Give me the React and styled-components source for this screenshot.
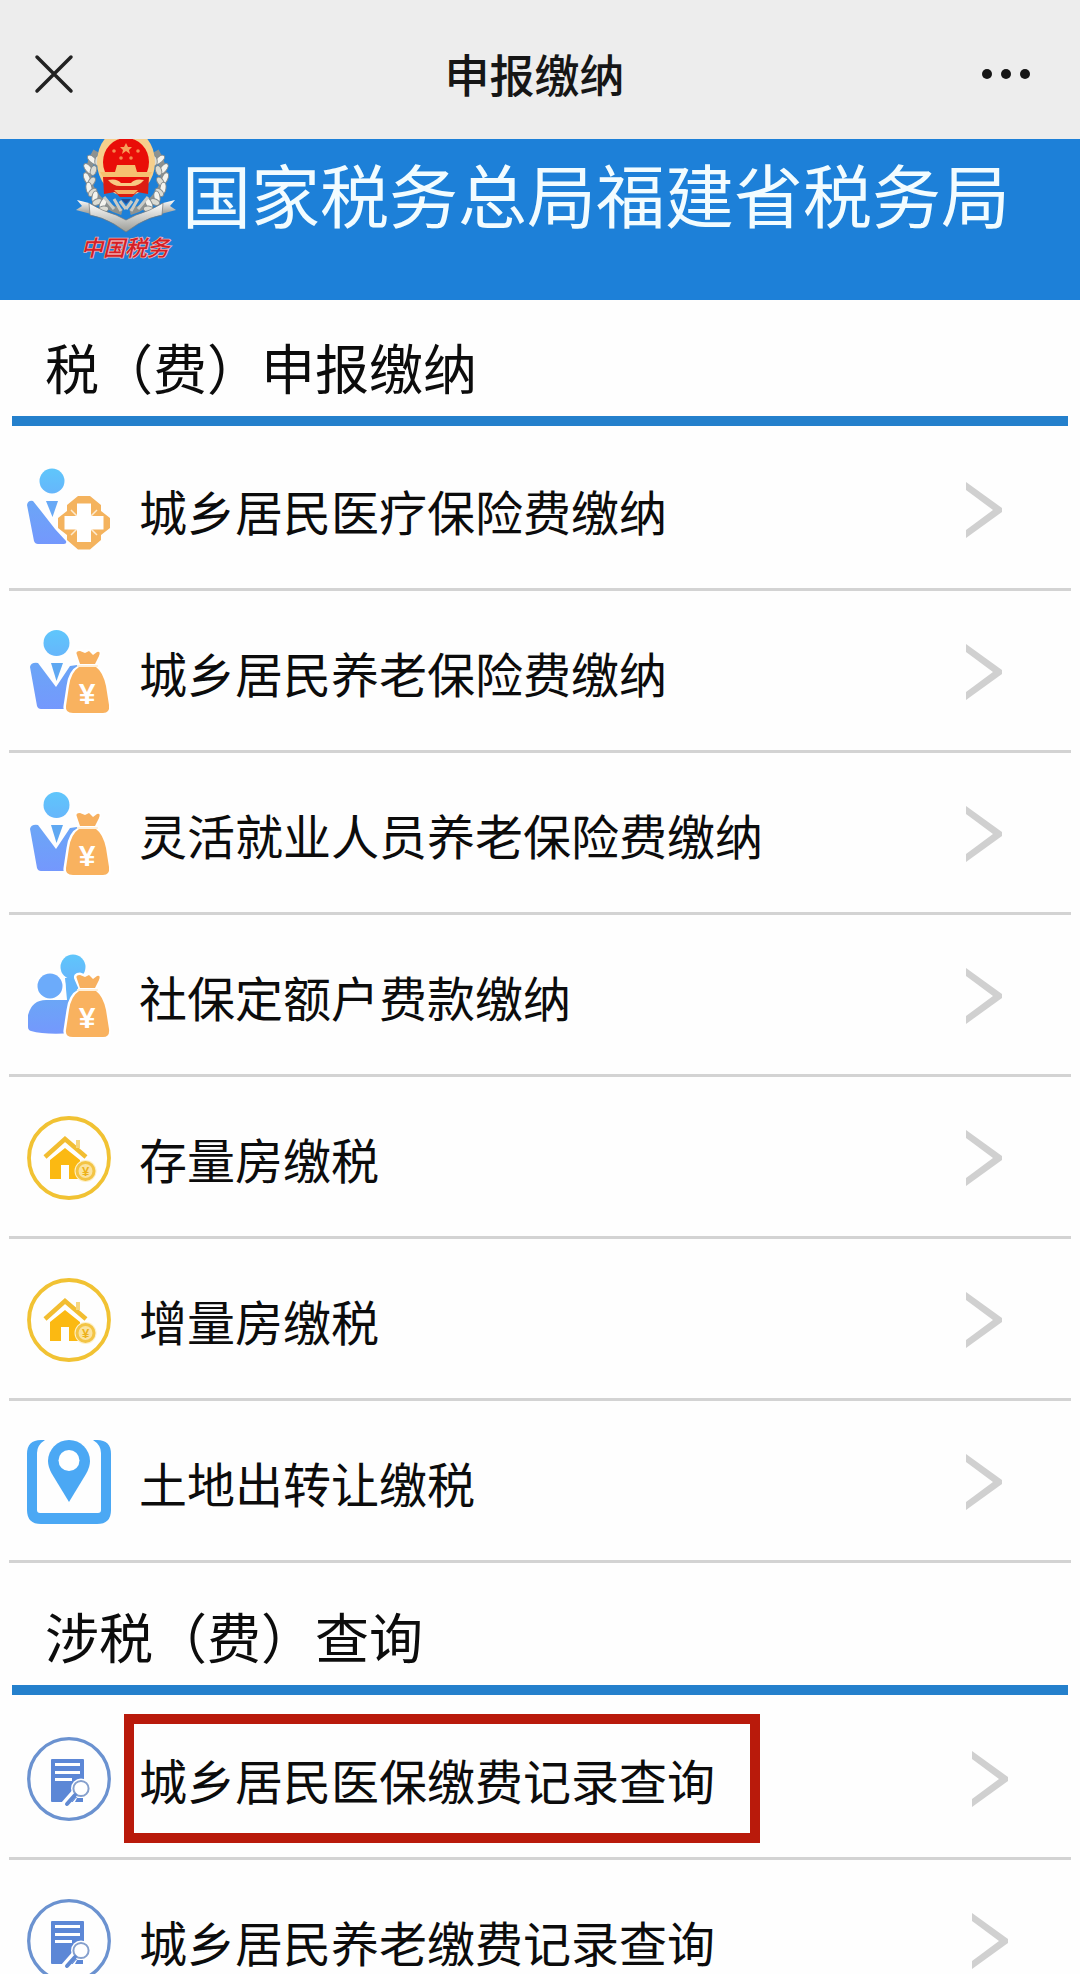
import React from "react";
import styled, { createGlobalStyle } from "styled-components";

const GlobalStyle = createGlobalStyle`
  *, *::before, *::after { box-sizing: border-box; }
  body {
    margin: 0;
    background: #fefefe;
    color: #0c0c0c;
    font-family: "Noto Sans CJK SC", "Noto Sans", sans-serif;
  }
`;

const Shell = styled.div`
  display: flex;
  flex-direction: column;
  height: 100vh;
`;

const TopBar = styled.header`
  display: grid;
  grid-template-columns: 60px 1fr 56px;
  align-items: center;
  flex: none;
  padding: 38px 49px 29px 34px;
  background: #ededed;
`;

const BarButton = styled.button`
  display: flex;
  align-items: center;
  justify-content: ${(p) => p.$align};
  height: 72px;
  padding: 0;
  border: 0;
  background: none;
  color: #222;
`;

const BarTitle = styled.h1`
  margin: 0;
  font-size: 45px;
  line-height: 72px;
  font-weight: 500;
  color: #161616;
  text-align: center;
`;

const Scroller = styled.main`
  flex: 1;
  min-height: 0;
  overflow-y: auto;
  scrollbar-width: none;
`;

const Banner = styled.div`
  display: flex;
  align-items: flex-start;
  gap: 6px;
  padding: 0 0 32px 76px;
  background: #1d80d8;
`;

const BannerName = styled.p`
  margin: 0;
  padding-top: 4px;
  font-size: 69px;
  line-height: 100px;
  color: #f2fcff;
  white-space: nowrap;
`;

const SectionTitle = styled.h2`
  margin: 0 12px;
  padding: 27px 33px 9px;
  border-bottom: 10px solid #2480cc;
  font-size: 54px;
  line-height: 80px;
  font-weight: 400;
`;

const List = styled.ul`
  margin: 0;
  padding: 3px 9px 6px;
  list-style: none;
`;

const RowLink = styled.a`
  display: flex;
  align-items: center;
  gap: 28px;
  height: 162px;
  padding: 3px ${(p) => p.$inset}px 0 18px;
  border-bottom: 3px solid #d3d3d3;
  color: inherit;
  text-decoration: none;
`;

const Label = styled.span`
  position: relative;
  font-size: 48px;
  line-height: 72px;
  white-space: nowrap;

  &::after {
    content: "";
    display: ${(p) => (p.$marked ? "block" : "none")};
    position: absolute;
    inset: -29px -45px -28px -15px;
    border: 10px solid #b91a0b;
  }
`;

const Glyph = styled.svg`
  display: block;
  flex: none;
`;

const Arrow = styled(Glyph)`
  margin-left: auto;
`;

function CloseIcon() {
  return (
    <Glyph width="40" height="40" viewBox="0 0 40 40" aria-hidden="true">
      <path d="M3 3 37 37M37 3 3 37" fill="none" stroke="#222" strokeWidth="3.5" strokeLinecap="round" />
    </Glyph>
  );
}

function MoreIcon() {
  return (
    <Glyph width="50" height="12" viewBox="0 0 50 12" aria-hidden="true">
      <circle cx="6" cy="6" r="5" fill="#161616" />
      <circle cx="25" cy="6" r="5" fill="#161616" />
      <circle cx="44" cy="6" r="5" fill="#161616" />
    </Glyph>
  );
}

function Emblem() {
  const leaves = [
    [17, 20, -20], [13, 29, -10], [12, 39, 5], [14, 49, 20], [20, 58, 38], [28, 65, 55],
  ];
  return (
    <Glyph width="100" height="129" viewBox="0 0 100 129" role="img" aria-label="中国税务">
      <defs>
        <linearGradient id="silver" x1="0" y1="0" x2="0" y2="1">
          <stop offset="0" stopColor="#ffffff" />
          <stop offset="1" stopColor="#9b9c96" />
        </linearGradient>
      </defs>
      {[false, true].map((flip) => (
        <g key={String(flip)} transform={flip ? "translate(100 0) scale(-1 1)" : undefined}>
          <path d="M20 12Q6 36 18 54 28 68 46 73" fill="none" stroke="#8d9290" strokeWidth="6" />
          {leaves.map(([x, y, a]) => (
            <g key={y} transform={`rotate(${a} ${x} ${y})`}>
              <ellipse cx={x - 1} cy={y} rx="3" ry="6" fill="#f4f4ef" stroke="#858b8d" strokeWidth="1" transform={`rotate(-28 ${x} ${y})`} />
              <ellipse cx={x + 5} cy={y + 1} rx="3" ry="5" fill="#dcdcd4" stroke="#858b8d" strokeWidth="1" transform={`rotate(28 ${x} ${y})`} />
            </g>
          ))}
          <path d="M38 70 28 58M45 72 38 60M50 70 44 62" stroke="#c9cac5" strokeWidth="3" />
          <path d="M1 61 13 64 16 70 15 75 0 71 6 67Z" fill="url(#silver)" />
        </g>
      ))}
      <ellipse cx="50" cy="23" rx="29" ry="34" fill="#f6cf8c" />
      <path d="M27 38H73L72 55 61 53 56 58H44L39 53 28 55Z" fill="#dc1c12" />
      <ellipse cx="50" cy="23" rx="23" ry="24" fill="#e90d08" />
      <path d="M50 4 52 8 56 8 53 11 54 15 50 12 46 15 47 11 44 8 48 8Z" fill="#f7a05a" />
      <g fill="#f58a50">
        <circle cx="38" cy="12" r="1.8" />
        <circle cx="62" cy="12" r="1.8" />
        <circle cx="45" cy="19" r="1.8" />
        <circle cx="55" cy="19" r="1.8" />
      </g>
      <path d="M41 26H59L61 33H76L73 38H27L24 33H39Z" fill="#f6c070" />
      <path d="M32 41Q41 39 45 44H55Q59 39 68 41 63 47 56 47H44Q37 47 32 41Z" fill="#f8c983" />
      <path d="M38 51H62L58 55H42Z" fill="#f5b064" />
      <path d="M45 60H55L50 65Z" fill="#244f94" />
      <path d="M13 64Q26 72 40 76L50 81 60 76Q74 72 87 64L86 76Q74 78 62 85L50 93 38 85Q26 78 14 76Z" fill="url(#silver)" stroke="#74797a" strokeWidth="0.7" />
      <g
        fill="#d51f26"
        stroke="#f3b3b6"
        strokeWidth="1.5"
        paintOrder="stroke"
        fontWeight="500"
        fontStyle="italic"
        fontFamily='"Noto Sans CJK SC", sans-serif'
      >
        <text x="5" y="117" fontSize="22">中国税务</text>
      </g>
    </Glyph>
  );
}

function IconFrame({ children }) {
  return (
    <Glyph width="84" height="84" viewBox="0 0 84 84" aria-hidden="true">
      <defs>
        <linearGradient id="head" x1="0" y1="0" x2="0" y2="1">
          <stop offset="0" stopColor="#5fc6fb" />
          <stop offset="1" stopColor="#66b6fb" />
        </linearGradient>
        <linearGradient id="coat" x1="0" y1="0" x2="0" y2="1">
          <stop offset="0" stopColor="#6ba6f6" />
          <stop offset="1" stopColor="#7498fd" />
        </linearGradient>
      </defs>
      {children}
    </Glyph>
  );
}

function MoneyBag() {
  return (
    <>
      <path
        d="M50 25Q48 21 53 21L58 23 62 21 66 25 70 22Q73 22 71 26L67 35 69 38Q76 42 79 56L82 75Q83 83 76 83H46Q38 83 39 76L42 56Q44 42 52 38L54 34Z"
        fill="#fff" stroke="#fff" strokeWidth="5" strokeLinejoin="round"
      />
      <path d="M50 25Q48 21 53 21L58 23 62 21 66 25 70 22Q74 21 72 26L68 34H53Z" fill="#f7b05f" />
      <path d="M52 37H69Q76 42 79 56L82 75Q83 83 76 83H46Q38 83 39 76L42 56Q44 42 52 37Z" fill="#f9b25f" />
      <path d="M50 36H71" stroke="#fff0da" strokeWidth="2" />
      <text x="60" y="74" textAnchor="middle" fontSize="30" fontWeight="700" fill="#fff" fontFamily='"Liberation Sans", sans-serif'>¥</text>
    </>
  );
}

function MedicalIcon() {
  const outline =
    "M51 28H63L74 37V43L83 50V60L74 67V72L63 81.500H51L40 72V67L31 60V50L40 43V37Z";
  return (
    <IconFrame>
      <circle cx="25" cy="13" r="12.5" fill="url(#head)" />
      <path d="M0 37Q1 32 6 33L14 43 28 61 39 73Q40 76 37 76H11Q8 76 7 73Z" fill="url(#coat)" />
      <path d="M19 33H31L25.500 49Z" fill="#68a9f6" />
      <path d={outline} fill="#f4b35e" />
      <path d="M44 42 51 49M70 42 63 49M44 67 51 60M70 67 63 60" stroke="#fdebd0" strokeWidth="1.500" />
      <path d="M50 35.500H64V48H76.500V61.500H64V74H50V61.500H37.500V48H50Z" fill="#fff" />
    </IconFrame>
  );
}

function PensionIcon() {
  return (
    <IconFrame>
      <circle cx="29.500" cy="13" r="13" fill="url(#head)" />
      <path d="M3 37Q4 32 11 33L29 57 43 36 50 35V79H14Q11 79 10 76Z" fill="url(#coat)" />
      <path d="M24 33H36L29.500 51Z" fill="#5fa8f2" />
      <MoneyBag />
    </IconFrame>
  );
}

function GroupIcon() {
  return (
    <IconFrame>
      <path d="M38 24H54V46H40Z" fill="#65b5fa" />
      <circle cx="46" cy="13" r="12.500" fill="url(#head)" />
      <circle cx="23" cy="32" r="15.500" fill="#fff" />
      <circle cx="23" cy="32" r="12.500" fill="#6cabfa" />
      <path d="M1 61Q5 46 19 46H46V79Q18 81 4 77 1 76 1 73Z" fill="url(#coat)" />
      <MoneyBag />
    </IconFrame>
  );
}

function HouseIcon() {
  return (
    <IconFrame>
      <circle cx="42" cy="42" r="40" fill="none" stroke="#f1c233" strokeWidth="3.800" />
      <path d="M18 41 38 23 59 41" fill="none" stroke="#f2bd31" strokeWidth="4.500" />
      <path d="M51 24V32" stroke="#f6d67e" strokeWidth="4" />
      <path d="M23 44 38 32 53 44V63H42V49H34V63H23Z" fill="#fbb912" />
      <circle cx="58.500" cy="55" r="11" fill="#fdf0c8" />
      <circle cx="58.500" cy="55" r="8.500" fill="#fbe3a0" stroke="#f3c445" strokeWidth="3" />
      <text x="58.500" y="60" textAnchor="middle" fontSize="13" fontWeight="700" fill="#edb21c" fontFamily='"Liberation Sans", sans-serif'>¥</text>
    </IconFrame>
  );
}

function LandIcon() {
  return (
    <IconFrame>
      <path
        d="M18 0H14Q0 0 0 14V70Q0 84 14 84H70Q84 84 84 70V14Q84 0 70 0H66Q74 5 74 13V70Q74 73 71 73H13Q10 73 10 70V13Q10 5 18 0Z"
        fill="#4ba8f4"
      />
      <path d="M42 0A21 21 0 0 1 63 21Q63 27 59 34L42 62 25 34Q21 27 21 21A21 21 0 0 1 42 0Z" fill="#4ba8f4" />
      <circle cx="42" cy="20.500" r="10.500" fill="#fff" />
    </IconFrame>
  );
}

function RecordIcon() {
  return (
    <IconFrame>
      <circle cx="42" cy="42" r="40.300" fill="none" stroke="#6b92d0" strokeWidth="3.300" />
      <path d="M25 22H56Q57 22 57 23V65H25Q24 65 24 64V23Q24 22 25 22Z" fill="#5c87d6" />
      <path d="M28 27.500H53M28 35.500H53M28 42.500H45" stroke="#fff" strokeWidth="2.800" />
      <circle cx="54" cy="51.500" r="10" fill="#fff" />
      <path d="M50 53 36 69" stroke="#fff" strokeWidth="7" />
      <path d="M43 68H62V61H49Z" fill="#fff" />
      <path d="M50 61H56V65H48Z" fill="#5c87d6" />
      <circle cx="54" cy="51.500" r="7.600" fill="#fff" stroke="#86a0cd" strokeWidth="2" />
      <path d="M48 58 40 67" stroke="#6089d2" strokeWidth="4" strokeLinecap="round" />
    </IconFrame>
  );
}

const sections = [
  {
    title: "税（费）申报缴纳",
    inset: 69,
    rows: [
      { label: "城乡居民医疗保险费缴纳", Icon: MedicalIcon },
      { label: "城乡居民养老保险费缴纳", Icon: PensionIcon },
      { label: "灵活就业人员养老保险费缴纳", Icon: PensionIcon },
      { label: "社保定额户费款缴纳", Icon: GroupIcon },
      { label: "存量房缴税", Icon: HouseIcon },
      { label: "增量房缴税", Icon: HouseIcon },
      { label: "土地出转让缴税", Icon: LandIcon },
    ],
  },
  {
    title: "涉税（费）查询",
    inset: 63,
    rows: [
      { label: "城乡居民医保缴费记录查询", Icon: RecordIcon, marked: true },
      { label: "城乡居民养老缴费记录查询", Icon: RecordIcon },
    ],
  },
];

export default function App() {
  return (
    <Shell>
      <GlobalStyle />
      <TopBar>
        <BarButton type="button" aria-label="关闭" $align="flex-start">
          <CloseIcon />
        </BarButton>
        <BarTitle>申报缴纳</BarTitle>
        <BarButton type="button" aria-label="更多" $align="flex-end">
          <MoreIcon />
        </BarButton>
      </TopBar>
      <Scroller>
        <Banner>
          <Emblem />
          <BannerName>国家税务总局福建省税务局</BannerName>
        </Banner>
        {sections.map(({ title, inset, rows }) => (
          <section key={title}>
            <SectionTitle>{title}</SectionTitle>
            <List>
              {rows.map(({ label, Icon, marked }) => (
                <li key={label}>
                  <RowLink href="#" $inset={inset}>
                    <Icon />
                    <Label $marked={marked}>{label}</Label>
                    <Arrow width="36" height="56" viewBox="0 0 36 56" aria-hidden="true">
                      <path d="M0 0 36 26V30L0 56V48L27 28 0 8Z" fill="#d0d0d0" />
                    </Arrow>
                  </RowLink>
                </li>
              ))}
            </List>
          </section>
        ))}
      </Scroller>
    </Shell>
  );
}
